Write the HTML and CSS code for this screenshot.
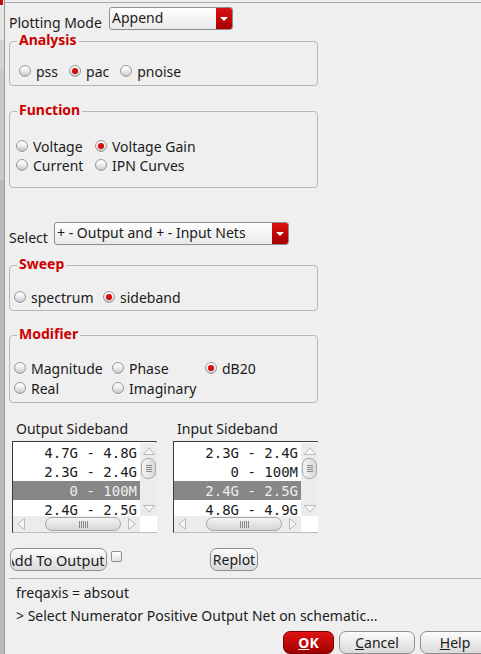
FILE: index.html
```html
<!DOCTYPE html>
<html>
<head>
<meta charset="utf-8">
<link rel="stylesheet" href="styles.css">
</head>
<body>
<div class="screen">
  <div class="behind">
    <span class="behind-mark"></span>
  </div>
  <div class="dialog">
    <div class="mode-row">
      <span class="mode-label">Plotting Mode</span>
      <div class="combo combo-mode"><span class="combo-text">Append</span><span class="combo-btn"><span class="combo-tri"></span></span></div>
    </div>

    <div class="group g-analysis">
      <div class="group-title">Analysis</div>
      <div class="hrow">
        <label class="opt"><span class="radio"></span>pss</label>
        <label class="opt"><span class="radio on"></span>pac</label>
        <label class="opt"><span class="radio"></span>pnoise</label>
      </div>
    </div>

    <div class="group g-function">
      <div class="group-title">Function</div>
      <div class="grid grid-function">
        <label class="opt"><span class="radio"></span>Voltage</label>
        <label class="opt"><span class="radio on"></span>Voltage Gain</label>
        <label class="opt"><span class="radio"></span>Current</label>
        <label class="opt"><span class="radio"></span>IPN Curves</label>
      </div>
    </div>

    <div class="select-row">
      <span class="select-label">Select</span>
      <div class="combo combo-select"><span class="combo-text">+ - Output and + - Input Nets</span><span class="combo-btn"><span class="combo-tri"></span></span></div>
    </div>

    <div class="group g-sweep">
      <div class="group-title">Sweep</div>
      <div class="grid grid-sweep">
        <label class="opt"><span class="radio"></span>spectrum</label>
        <label class="opt"><span class="radio on"></span>sideband</label>
      </div>
    </div>

    <div class="group g-modifier">
      <div class="group-title">Modifier</div>
      <div class="grid grid-modifier">
        <label class="opt"><span class="radio"></span>Magnitude</label>
        <label class="opt"><span class="radio"></span>Phase</label>
        <label class="opt"><span class="radio on"></span>dB20</label>
        <label class="opt"><span class="radio"></span>Real</label>
        <label class="opt"><span class="radio"></span>Imaginary</label>
      </div>
    </div>

    <div class="lists">
      <div class="list-col">
        <div class="list-label">Output Sideband</div>
        <div class="listbox">
          <div class="list-items">
            <div class="item">4.7G - 4.8G</div>
            <div class="item">2.3G - 2.4G</div>
            <div class="item sel">0 - 100M</div>
            <div class="item">2.4G - 2.5G</div>
          </div>
          <div class="vscroll">
            <span class="sb-btn"><svg width="12" height="8" viewBox="0 0 12 8"><polygon points="0.5,7.5 6,0.8 11.5,7.5" fill="#f6f6f6" stroke="#b9b9b9"/></svg></span>
            <span class="vhandle"><span class="grip-h"></span></span>
            <span class="vtrack"></span>
            <span class="sb-btn"><svg width="12" height="8" viewBox="0 0 12 8"><polygon points="0.5,0.5 6,7.2 11.5,0.5" fill="#f6f6f6" stroke="#b9b9b9"/></svg></span>
          </div>
          <div class="hscroll">
            <span class="sb-btn-h"><svg width="8" height="12" viewBox="0 0 8 12"><polygon points="7.5,0.5 0.8,6 7.5,11.5" fill="#f6f6f6" stroke="#b9b9b9"/></svg></span>
            <span class="htrack-a"></span>
            <span class="hhandle"><span class="grip-v"></span></span>
            <span class="sb-btn-h"><svg width="8" height="12" viewBox="0 0 8 12"><polygon points="0.5,0.5 7.2,6 0.5,11.5" fill="#f6f6f6" stroke="#b9b9b9"/></svg></span>
          </div>
          <div class="corner"></div>
        </div>
      </div>
      <div class="list-col">
        <div class="list-label">Input Sideband</div>
        <div class="listbox">
          <div class="list-items">
            <div class="item">2.3G - 2.4G</div>
            <div class="item">0 - 100M</div>
            <div class="item sel">2.4G - 2.5G</div>
            <div class="item">4.8G - 4.9G</div>
          </div>
          <div class="vscroll">
            <span class="sb-btn"><svg width="12" height="8" viewBox="0 0 12 8"><polygon points="0.5,7.5 6,0.8 11.5,7.5" fill="#f6f6f6" stroke="#b9b9b9"/></svg></span>
            <span class="vhandle"><span class="grip-h"></span></span>
            <span class="vtrack"></span>
            <span class="sb-btn"><svg width="12" height="8" viewBox="0 0 12 8"><polygon points="0.5,0.5 6,7.2 11.5,0.5" fill="#f6f6f6" stroke="#b9b9b9"/></svg></span>
          </div>
          <div class="hscroll">
            <span class="sb-btn-h"><svg width="8" height="12" viewBox="0 0 8 12"><polygon points="7.5,0.5 0.8,6 7.5,11.5" fill="#f6f6f6" stroke="#b9b9b9"/></svg></span>
            <span class="htrack-a"></span>
            <span class="hhandle"><span class="grip-v"></span></span>
            <span class="sb-btn-h"><svg width="8" height="12" viewBox="0 0 8 12"><polygon points="0.5,0.5 7.2,6 0.5,11.5" fill="#f6f6f6" stroke="#b9b9b9"/></svg></span>
          </div>
          <div class="corner"></div>
        </div>
      </div>
    </div>

    <div class="action-row">
      <div class="btn btn-add"><span class="btn-clip"><span>Add To Outputs</span></span></div>
      <span class="checkbox"></span>
      <div class="btn btn-replot"><span>Replot</span></div>
    </div>

    <div class="separator"></div>

    <div class="msg">freqaxis = absout</div>
    <div class="msg">&gt; Select Numerator Positive Output Net on schematic...</div>

    <div class="bottom-row">
      <div class="btn btn-ok"><span><u>O</u>K</span></div>
      <div class="btn btn-cancel"><span><u>C</u>ancel</span></div>
      <div class="btn btn-help"><span><u>H</u>elp</span></div>
    </div>
  </div>
</div>
</body>
</html>
```

FILE: styles.css
```css
* { box-sizing: border-box; }
html, body {
  margin: 0;
  padding: 0;
  width: 481px;
  height: 654px;
  overflow: hidden;
  background: #efefef;
}
body {
  font-family: "Noto Sans", "DejaVu Sans", sans-serif;
  font-size: 14px;
  color: #1b1b1b;
}
.screen {
  display: flex;
  height: 654px;
}
.behind {
  width: 5px;
  flex: none;
  background: linear-gradient(to bottom, #e6e6e6 0, #e6e6e6 40px, #d2d2d2 40px, #d2d2d2 70px, #c9c9c9 70px, #c9c9c9 180px, #b9b9b9 180px);
  border-right: 1px solid #9a9a9a;
}
.behind-mark {
  display: block;
  width: 3px;
  height: 5px;
  background: #c01010;
}
.dialog {
  flex: 1;
  min-width: 0;
  margin-top: 2px;
  border-top: 1px solid #a9a9a9;
  padding-left: 4px;
}

/* plotting mode */
.mode-row {
  display: flex;
  align-items: center;
  margin-top: 4px;
  height: 23px;
}
.mode-label {
  width: 100px;
  line-height: 18px;
  padding-top: 8px;
}
.combo {
  display: flex;
  height: 23px;
  border: 1px solid #8d8d8d;
  border-radius: 3px;
  background: linear-gradient(to bottom, #ffffff, #e9e9e9);
  overflow: hidden;
}
.combo-mode { width: 124px; }
.combo-text {
  flex: 1;
  padding-left: 2px;
  line-height: 20px;
  white-space: nowrap;
}
.combo-btn {
  width: 16px;
  background: linear-gradient(to bottom, #dc1010, #a60000);
  display: flex;
  align-items: center;
  justify-content: center;
}
.combo-tri {
  width: 0;
  height: 0;
  border-left: 4px solid transparent;
  border-right: 4px solid transparent;
  border-top: 4px solid #ffffff;
}

/* groups */
.group {
  width: 309px;
  border: 1px solid #b7b7b7;
  border-radius: 4px;
}
.group-title {
  width: fit-content;
  margin: -10px 0 0 7px;
  padding: 0 2px;
  background: #efefef;
  color: #cc0000;
  font-weight: bold;
  line-height: 16px;
}
.opt {
  display: flex;
  align-items: center;
  height: 18px;
  white-space: nowrap;
}
.radio {
  width: 12px;
  height: 12px;
  border-radius: 50%;
  border: 1px solid #989898;
  background: linear-gradient(to bottom, #ffffff 0, #f2f2f2 40%, #c6c6c6 100%);
  box-shadow: 0 1px 0 rgba(255,255,255,0.6);
  margin-right: 5px;
  flex: none;
  display: flex;
  align-items: center;
  justify-content: center;
}
.radio.on::after {
  content: "";
  width: 6px;
  height: 6px;
  border-radius: 50%;
  background: radial-gradient(circle at 45% 40%, #f01010, #b00000);
}
.g-analysis {
  margin-top: 11px;
  padding-bottom: 5px;
}
.hrow {
  display: flex;
  gap: 11px;
  margin-top: 14px;
  padding-left: 9px;
}
.g-function {
  margin-top: 25px;
  padding-bottom: 13px;
}
.grid {
  display: grid;
}
.grid-function {
  grid-template-columns: 79px auto;
  row-gap: 1px;
  margin-top: 19px;
  padding-left: 6px;
}
.select-row {
  display: flex;
  align-items: center;
  margin-top: 34px;
  height: 23px;
}
.select-label {
  width: 45px;
  line-height: 18px;
  padding-top: 9px;
}
.combo-select { width: 235px; }

.g-sweep {
  margin-top: 20px;
  padding-bottom: 4px;
}
.grid-sweep {
  grid-template-columns: 89px auto;
  margin-top: 16px;
  padding-left: 4px;
}
.g-modifier {
  margin-top: 24px;
  padding-bottom: 5px;
}
.grid-modifier {
  grid-template-columns: 98px 93px auto;
  row-gap: 2px;
  margin-top: 17px;
  padding-left: 4px;
}

/* lists */
.lists {
  display: flex;
  gap: 16px;
  margin-top: 17px;
  padding-left: 3px;
}
.list-col { width: 145px; }
.list-label {
  padding-left: 4px;
  line-height: 18px;
  margin-bottom: 3px;
}
.listbox {
  display: grid;
  grid-template-columns: 1fr 17px;
  grid-template-rows: 73px 16px;
  height: 92px;
  border: 1px solid #3a3a3a;
  border-right-color: #bdbdbd;
  border-bottom-color: #bdbdbd;
  background: #ffffff;
  padding: 1px 0 0 0;
}
.list-items {
  overflow: hidden;
  font-family: "DejaVu Sans Mono", monospace;
  font-size: 14px;
}
.item {
  height: 19px;
  line-height: 20px;
  text-align: right;
  padding-right: 3px;
  white-space: pre;
  color: #1b1b1b;
}
.item.sel {
  background: #878787;
  color: #eeeeee;
}
.vscroll {
  display: flex;
  flex-direction: column;
  background: #ececec;
  align-items: center;
}
.sb-btn {
  height: 15px;
  width: 17px;
  display: flex;
  align-items: center;
  justify-content: center;
  flex: none;
}
.vhandle {
  width: 15px;
  height: 21px;
  border: 1px solid #a8a8a8;
  border-radius: 7px;
  background: linear-gradient(to right, #f4f4f4, #d9d9d9);
  display: flex;
  align-items: center;
  justify-content: center;
  flex: none;
}
.vtrack { flex: 1; }
.grip-h {
  width: 6px;
  height: 7px;
  background: repeating-linear-gradient(to bottom, #8a8a8a 0, #8a8a8a 1px, transparent 1px, transparent 2px);
}
.grip-v {
  width: 9px;
  height: 7px;
  background: repeating-linear-gradient(to right, #8a8a8a 0, #8a8a8a 1px, transparent 1px, transparent 2px);
}
.hscroll {
  display: flex;
  align-items: center;
  background: #ececec;
}
.sb-btn-h {
  width: 16px;
  height: 16px;
  display: flex;
  align-items: center;
  justify-content: center;
  flex: none;
}
.htrack-a { width: 16px; flex: none; }
.hhandle {
  width: 76px;
  height: 14px;
  border: 1px solid #a8a8a8;
  border-radius: 7px;
  background: linear-gradient(to bottom, #f4f4f4, #d6d6d6);
  display: flex;
  align-items: center;
  justify-content: center;
  flex: none;
  margin-right: 3px;
}
.corner { background: #ffffff; }

/* buttons */
.action-row {
  display: flex;
  align-items: flex-start;
  margin-top: 15px;
  height: 23px;
}
.btn {
  height: 23px;
  border: 1px solid #8f8f8f;
  border-radius: 7px;
  background: linear-gradient(to bottom, #fcfcfc, #dadada);
  display: flex;
  align-items: center;
  justify-content: center;
  overflow: hidden;
  white-space: nowrap;
  line-height: 18px;
  flex: none;
}
.btn-add {
  width: 97px;
  margin-left: 1px;
  padding: 0 1px;
}
.btn-clip {
  display: flex;
  justify-content: center;
  width: 100%;
  overflow: hidden;
  font-size: 14.5px;
}
.checkbox {
  width: 11px;
  height: 11px;
  border: 1px solid #8f8f8f;
  border-radius: 2px;
  background: linear-gradient(to bottom, #ffffff, #e2e2e2);
  margin: 3px 0 0 4px;
  flex: none;
}
.btn-replot {
  width: 48px;
  margin-left: 88px;
}
.separator {
  margin-top: 7px;
  height: 1px;
  background: #b0b0b0;
}
.msg {
  padding-left: 7px;
  line-height: 18px;
  margin-top: 5px;
}
.msg + .msg { margin-top: 5px; }
.bottom-row {
  display: flex;
  gap: 5px;
  margin-top: 6px;
  margin-left: 274px;
}
.btn-ok {
  width: 51px;
  background: linear-gradient(to bottom, #e11313, #a00000);
  border-color: #7a0000;
  color: #ffffff;
  font-weight: bold;
}
.btn-cancel { width: 76px; }
.btn-help { width: 70px; }
```
